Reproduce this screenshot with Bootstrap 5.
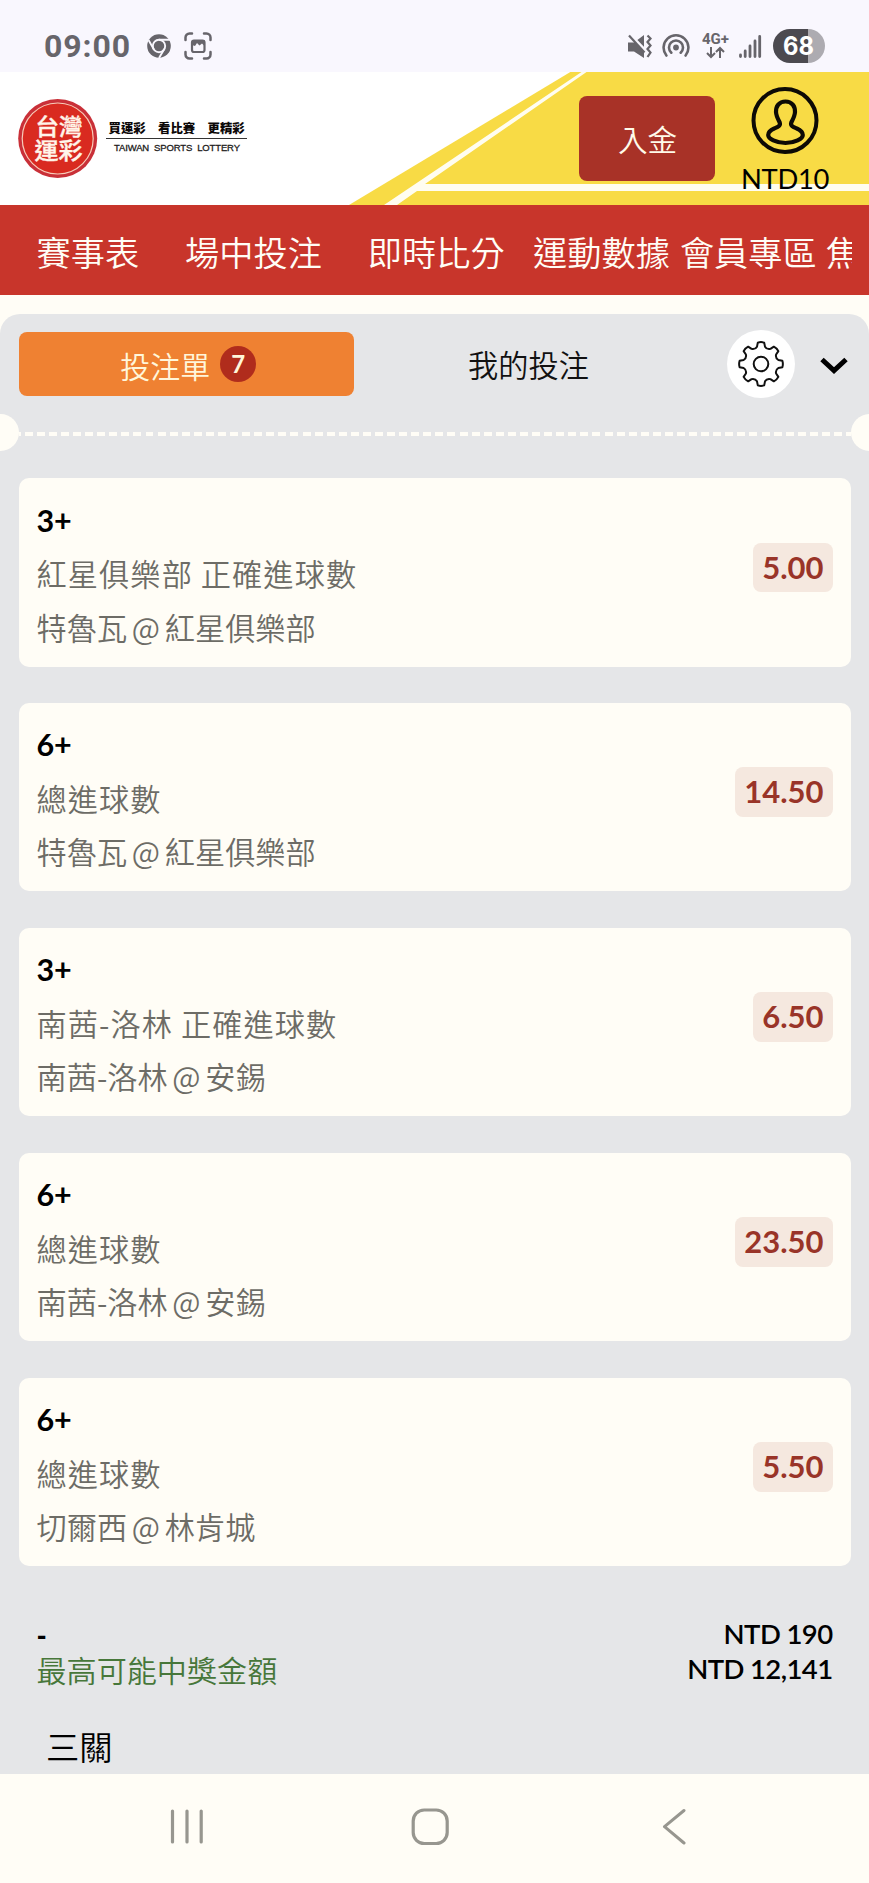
<!DOCTYPE html>
<html lang="zh-Hant">
<head>
<meta charset="utf-8">
<meta name="viewport" content="width=device-width, initial-scale=1">
<title>台灣運彩</title>
<link href="https://cdn.jsdelivr.net/npm/bootstrap@5.3.0/dist/css/bootstrap.min.css" rel="stylesheet">
<style>
  body { font-family: Lato, "Noto Sans CJK TC", sans-serif; background: #fffdf6; color: #000; height: 1883px; overflow: hidden; line-height: 1; }
  .cjk { font-family: "Noto Sans CJK TC", sans-serif; font-weight: 350; }
  svg { display: block; flex: none; }
  .statusbar { height: 72px; background: #f9f7fe; color: #67656b; padding: 20px 44px 0 44px; }
  .clock { font: 700 32px/40px Roboto, sans-serif; letter-spacing: .9px; width: 103px; }
  .shot { margin-left: 13px; }
  .brandbar { height: 133px; background: #fff; }
  .brandbar .backdrop { z-index: 0; }
  .brandbar > .front { z-index: 1; position: relative; }
  .deposit { width: 136px; height: 85px; margin-top: 24px; background: #a83227; border-radius: 8px; color: #fffbea; font-size: 29.6px; border: 0; padding: 0 0 0 1px; }
  .account { width: 110px; margin: 15px 29px 0 15px; }
  .account .amount { font-size: 27.4px; line-height: 30px; margin-top: 9px; letter-spacing: -.3px; }
  .mainnav { height: 90px; background: #c8352b; color: #fffdf6; font-size: 34.2px; line-height: 90px; padding: 1px 17px 0 36.5px; }
  .mainnav .scroller { overflow: hidden; white-space: nowrap; }
  .mainnav a { color: inherit; text-decoration: none; flex: none; }
  .slip { margin-top: 19px; height: 1460px; background: #e5e6e8; border-radius: 20px 20px 0 0; overflow: hidden; }
  .tabs { padding: 18px 17px 0 18.5px; height: 100px; }
  .tab-on { width: 335.5px; height: 64px; background: #ef8132; border-radius: 8px; color: #fff6da; font-size: 30px; padding-left: 4px; }
  .tab-off { width: 349px; height: 64px; font-size: 30.2px; color: #111; }
  .tab-on .cjk, .tab-off .cjk { padding-top: 1px; }
  .count { width: 36px; height: 36px; background: #b02c1c; font-size: 24px; font-weight: 700; margin-left: 10px; }
  .gearbtn { width: 68px; height: 68px; background: #fff; margin-top: -2px; margin-left: 23.5px; }
  .chev { margin: 23px 0 0 24px; }
  .tear { height: 37px; margin: 0 -18.5px; }
  .notch { width: 37px; height: 37px; border-radius: 50%; background: #fffdf6; flex: none; }
  .dashes { height: 4px; margin: 2px 0 0 0; background: repeating-linear-gradient(90deg, #fffdf6 0 1.6px, transparent 1.6px 5.7px, #fffdf6 5.7px 12.08px); }
  .bets { padding: 27px 18px 0 18.5px; gap: 36.4px; }
  .bet { height: 188.5px; background: #fffdf6; border-radius: 10px; padding: 21.5px 18.5px 0 18px; }
  .pick { font-size: 30.5px; font-weight: 700; line-height: 40px; letter-spacing: -.2px; }
  .desc { font-size: 30.2px; line-height: 54px; height: 54px; color: #6d6c66; white-space: nowrap; margin-top: 6.5px; }
  .desc.market { letter-spacing: 1.1px; }
  .desc.teams { margin-top: -.5px; }
  .vs { margin: 0 -2px; }
  .odds { height: 49.5px; background: #f5e8df; color: #993428; border-radius: 8px; font-size: 31px; font-weight: 700; line-height: 49px; padding: 0 9px; margin-top: 43px; }
  .totals { padding: 50px 36.5px 0; font-weight: 600; font-size: 27.5px; line-height: 35.2px; letter-spacing: -.6px; }
  .totals .d-flex { height: 35.2px; }
  .totals .maxwin { font-size: 30.1px; font-weight: 350; color: #47773a; padding-top: 1px; letter-spacing: 0; }
  .stake { font-weight: 900; padding-top: 2px; }
  .parlay { font-size: 33.3px; padding: 35px 46px 0; line-height: 50px; }
  .sysnav { height: 109px; padding: 0 0 4px 170px; }
  .sysnav .home { margin: 0 212.5px 0 207px; }
</style>
</head>
<body>
<header class="statusbar d-flex align-items-center">
  <div class="clock">09:00</div>
  <svg width="24" height="24" viewBox="0 0 24 24"><circle cx="12" cy="12" r="11.8" fill="#67656b"/><circle cx="12" cy="12" r="6.2" fill="none" stroke="#f9f7fe" stroke-width="1.9"/><path d="M12 5.8H23M6.7 15.1L1.5 6M17.3 15.1L12 24" stroke="#f9f7fe" stroke-width="1.9"/></svg>
  <svg class="shot me-auto" width="28" height="28" viewBox="0 0 28 28" fill="none" stroke="#67656b" stroke-width="2.5" stroke-linecap="round"><path d="M1.5 8V5.500a4 4 0 0 1 4-4H8M20 1.500h2.500a4 4 0 0 1 4 4V8M26.500 20v2.500a4 4 0 0 1-4 4H20M8 26.500H5.500a4 4 0 0 1-4-4V20"/><rect x="8" y="8.500" width="12.500" height="11.500" rx="2" stroke-width="2.200"/><path d="M8 8h12.500v6l-2.500-2.500-2.500 2-2.500-2.500-2 3-3-1z" fill="#67656b" stroke="none"/></svg>
  <svg width="25" height="25" viewBox="0 0 25 25"><path d="M1 8.500h6L17 1v23L7 17.500H1z" fill="#67656b"/><path d="M0 0L18 18.500" stroke="#f9f7fe" stroke-width="3" transform="translate(1.500 -1)"/><path d="M2 1.500L17.500 18.500" stroke="#67656b" stroke-width="2.200"/><path d="M20.500 1.500l3 3-3 3.500 3 3.500-3 3.500 3 3.500-3 4.500" fill="none" stroke="#67656b" stroke-width="2.200"/></svg>
  <svg style="margin-left:10px" width="28" height="28" viewBox="0 0 28 28" fill="none" stroke="#67656b" stroke-width="2.600" stroke-linecap="round"><circle cx="14" cy="15.500" r="2.900" fill="#67656b" stroke="none"/><path d="M9.300 20.700A7 7 0 1 1 18.700 20.700M4.400 23.500A12.400 12.400 0 1 1 23.600 23.500" /></svg>
  <svg style="margin-left:12px" width="28" height="30" viewBox="0 0 28 30"><text x="0" y="13" font-family="Roboto" font-weight="700" font-size="14.500" textLength="27" lengthAdjust="spacingAndGlyphs" fill="#67656b">4G+</text><path d="M9 16v10M5 22l4 4 4-4M18 27V17M14 21l4-4 4 4" fill="none" stroke="#67656b" stroke-width="2"/></svg>
  <svg style="margin-left:9px" width="23" height="25" viewBox="0 0 23 25" stroke="#67656b" stroke-width="2.800" stroke-linecap="round"><path d="M1.500 21v1.500M6.200 17v5.500M11 12v10.500M16 7v15.500M20.700 2.500v20"/></svg>
  <svg style="margin-left:11px" width="52" height="34" viewBox="0 0 52 34"><path d="M35 0H17a17 17 0 0 0 0 34h18z" fill="#4c4a50"/><path d="M35 0a17 17 0 0 1 0 34z" fill="#adabb1"/><text x="10" y="26.200" font-family="Inter" font-weight="700" font-size="25.500" textLength="31" lengthAdjust="spacingAndGlyphs" fill="#fff">68</text></svg>
</header>

<section class="brandbar position-relative d-flex align-items-start">
  <svg class="backdrop position-absolute top-0 end-0" width="869" height="133" viewBox="0 1 869 133">
    <path d="M572 0H869V134H349z" fill="#f8db45"/>
    <path d="M583 0H588L425 113H869V120H417L397 134H384z" fill="#fffdf0"/>
  </svg>
  <svg class="front me-auto" width="260" height="133" viewBox="0 1 260 133">
    <circle cx="57.700" cy="67.500" r="39.500" fill="#c93038"/><circle cx="57.700" cy="67.500" r="35.500" fill="#d92a20" stroke="#f7ccb9" stroke-width="1.200"/>
    <g font-family="Noto Sans CJK TC" font-weight="500" fill="#fff5ea" stroke="#fff5ea" stroke-width=".4" font-size="22.500">
      <text x="35.500" y="64.400" textLength="47" lengthAdjust="spacingAndGlyphs">台灣</text><text x="34.500" y="88.400" textLength="48" lengthAdjust="spacingAndGlyphs">運彩</text>
    </g>
    <g font-family="Noto Sans CJK TC" font-weight="900" fill="#0c0808" font-size="12.400">
      <text x="108.500" y="61.500">買運彩</text><text x="158" y="61.500">看比賽</text><text x="207.500" y="61.500">更精彩</text>
    </g>
    <path d="M106 67.500H247" stroke="#333" stroke-width="1"/>
    <text x="114" y="79.800" font-family="Liberation Sans" font-size="9.500" textLength="126" word-spacing="2.500" fill="#221c1c" stroke="#221c1c" stroke-width=".3">TAIWAN SPORTS LOTTERY</text>
  </svg>
  <button class="front deposit cjk">入金</button>
  <div class="front account d-flex flex-column align-items-center">
    <svg width="68" height="68" viewBox="0 0 68 68" fill="none" stroke="#0d0a05"><circle cx="34" cy="33.500" r="31.500" stroke-width="4"/><path d="M34.500 14.500c-6.500 0-9.700 5-9.500 10.500c.2 4 2.200 7.500 3.700 10.500c1.200 3.500-2 4.500-5.500 6c-3.500 1.500-6 3.300-6 6.500c0 3.800 8 8 17.300 8s17.300-4.200 17.300-8c0-3.200-2.500-5-6-6.500c-3.500-1.500-6.700-2.500-5.500-6c1.500-3 3.500-6.500 3.700-10.500c.2-5.500-3-10.500-9.500-10.500z" stroke-width="4.200"/></svg>
    <div class="amount">NTD10</div>
  </div>
</section>

<nav class="mainnav cjk">
  <div class="scroller d-flex">
    <a href="#" style="margin-right:46px">賽事表</a><a href="#" style="margin-right:46px">場中投注</a><a href="#" style="margin-right:28.5px">即時比分</a><a href="#" style="margin-right:10px">運動數據</a><a href="#" style="margin-right:9px">會員專區</a><a href="#">焦點</a>
  </div>
</nav>

<main class="slip">
  <div class="tabs d-flex align-items-start">
    <div class="tab-on d-flex align-items-center justify-content-center"><span class="cjk">投注單</span><span class="count rounded-circle d-flex align-items-center justify-content-center">7</span></div>
    <div class="tab-off d-flex align-items-center justify-content-center"><span class="cjk">我的投注</span></div>
    <div class="gearbtn rounded-circle d-flex align-items-center justify-content-center">
      <svg width="48" height="48" viewBox="-24 -24 48 48" fill="none" stroke="#111" stroke-width="2" stroke-linejoin="round"><circle r="7.300"/>
        <path id="gear"/></svg>
    </div>
    <svg class="chev" width="30" height="20" viewBox="0 0 30 20" fill="none" stroke="#000" stroke-width="5"><path d="M3 4.500L15 15.500L27 4.500"/></svg>
  </div>
  <div class="tear d-flex align-items-center">
    <div class="notch"></div><div class="dashes flex-fill"></div><div class="notch"></div>
  </div>
  <div class="bets d-flex flex-column">
    <article class="bet d-flex justify-content-between"><div><div class="pick">3+</div><div class="desc market cjk">紅星俱樂部 正確進球數</div><div class="desc teams cjk">特魯瓦 <span class="vs">@</span> 紅星俱樂部</div></div><div class="odds">5.00</div></article>
    <article class="bet d-flex justify-content-between"><div><div class="pick">6+</div><div class="desc market cjk">總進球數</div><div class="desc teams cjk">特魯瓦 <span class="vs">@</span> 紅星俱樂部</div></div><div class="odds">14.50</div></article>
    <article class="bet d-flex justify-content-between"><div><div class="pick">3+</div><div class="desc market cjk">南茜-洛林 正確進球數</div><div class="desc teams cjk">南茜-洛林 <span class="vs">@</span> 安錫</div></div><div class="odds">6.50</div></article>
    <article class="bet d-flex justify-content-between"><div><div class="pick">6+</div><div class="desc market cjk">總進球數</div><div class="desc teams cjk">南茜-洛林 <span class="vs">@</span> 安錫</div></div><div class="odds">23.50</div></article>
    <article class="bet d-flex justify-content-between"><div><div class="pick">6+</div><div class="desc market cjk">總進球數</div><div class="desc teams cjk">切爾西 <span class="vs">@</span> 林肯城</div></div><div class="odds">5.50</div></article>
  </div>
  <div class="totals">
    <div class="d-flex justify-content-between"><span class="stake">-</span><span>NTD 190</span></div>
    <div class="d-flex justify-content-between"><span class="maxwin cjk">最高可能中獎金額</span><span>NTD 12,141</span></div>
  </div>
  <div class="parlay cjk">三關</div>
</main>

<footer class="sysnav d-flex align-items-center">
  <svg width="34" height="36" viewBox="0 0 34 36" stroke="#97968f" stroke-width="3.200" stroke-linecap="round"><path d="M2.500 2v31M17 2v31M31.200 2v31"/></svg>
  <svg class="home" width="38" height="38" viewBox="0 0 38 38" fill="none" stroke="#97968f" stroke-width="3.200"><rect x="2.200" y="2" width="34" height="33.500" rx="11"/></svg>
  <svg width="24" height="38" viewBox="0 0 24 38" fill="none" stroke="#97968f" stroke-width="3" stroke-linecap="round" stroke-linejoin="round"><path d="M22 2.500L2.500 18.700L22 35"/></svg>
</footer>
<script>
  // Eight-toothed gear outline: flat-topped teeth joined by rounded valleys.
  const at = (r, deg) => { const a = (deg - 90) * Math.PI / 180; return (r * Math.cos(a)).toFixed(2) + ' ' + (r * Math.sin(a)).toFixed(2); };
  let d = '';
  for (let i = 0; i < 8; i++) {
    const c = i * 45;
    d += (i ? 'L' : 'M') + at(21.6, c - 8.5) + 'Q' + at(22.4, c) + ' ' + at(21.6, c + 8.5) + 'L' + at(17.8, c + 13) + 'Q' + at(15.4, c + 22.5) + ' ' + at(17.8, c + 32);
  }
  document.getElementById('gear').setAttribute('d', d + 'Z');
</script>
<script src="https://cdn.jsdelivr.net/npm/bootstrap@5.3.0/dist/js/bootstrap.bundle.min.js"></script>
</body>
</html>
